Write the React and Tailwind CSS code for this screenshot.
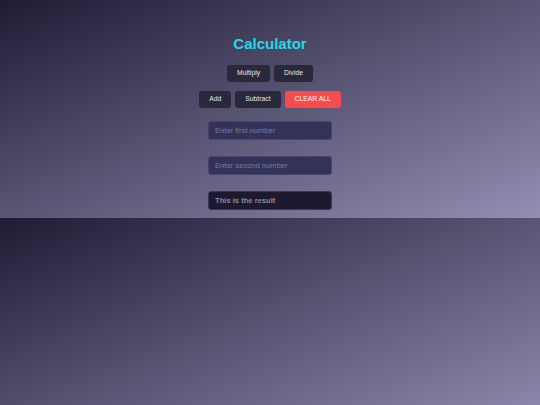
export default function App() {
  return (
    <div
      className="h-[405px] w-full bg-[linear-gradient(to_bottom_right,#1e1c35,#948eb2)] bg-[length:100%_218px] bg-repeat-y"
      style={{ fontFamily: '"Liberation Sans", Arial, sans-serif' }}
    >
      <div className="flex flex-col items-center pt-[35px] pb-[8px]">
        <h1 className="text-[15px] font-bold text-[#22d8ea] leading-[18px]">Calculator</h1>

        <div className="mt-[12px] flex gap-[4px]">
          <button className="h-[17px] rounded-[3px] bg-[#29293c] px-[10px] text-[6.8px] text-[#e4e4ea]">Multiply</button>
          <button className="h-[17px] rounded-[3px] bg-[#29293c] px-[10px] text-[6.8px] text-[#e4e4ea]">Divide</button>
        </div>

        <div className="mt-[9px] flex gap-[4px]">
          <button className="h-[17px] rounded-[3px] bg-[#29293c] px-[10px] text-[6.8px] text-[#e4e4ea]">Add</button>
          <button className="h-[17px] rounded-[3px] bg-[#29293c] px-[10px] text-[6.8px] text-[#e4e4ea]">Subtract</button>
          <button className="h-[17px] rounded-[3px] bg-[#f74b4d] px-[10px] text-[6.8px] text-white">CLEAR ALL</button>
        </div>

        <div className="mt-[13px] flex flex-col gap-[16.5px]">
          <input
            type="text"
            placeholder="Enter first number"
            className="h-[18.5px] w-[124px] rounded-[3px] border border-[#47456c] bg-[#33335a] px-[6px] text-[7.6px] text-white outline-none placeholder:text-[#7c7b98]"
          />
          <input
            type="text"
            placeholder="Enter second number"
            className="h-[18.5px] w-[124px] rounded-[3px] border border-[#47456c] bg-[#33335a] px-[6px] text-[7.6px] text-white outline-none placeholder:text-[#7c7b98]"
          />
          <div className="flex h-[18.5px] w-[124px] items-center rounded-[3px] border border-[#3b3756] bg-[#1d1a30] px-[6px] text-[7.6px] font-bold text-[#8c899b]">
            This is the result
          </div>
        </div>
      </div>
    </div>
  );
}
